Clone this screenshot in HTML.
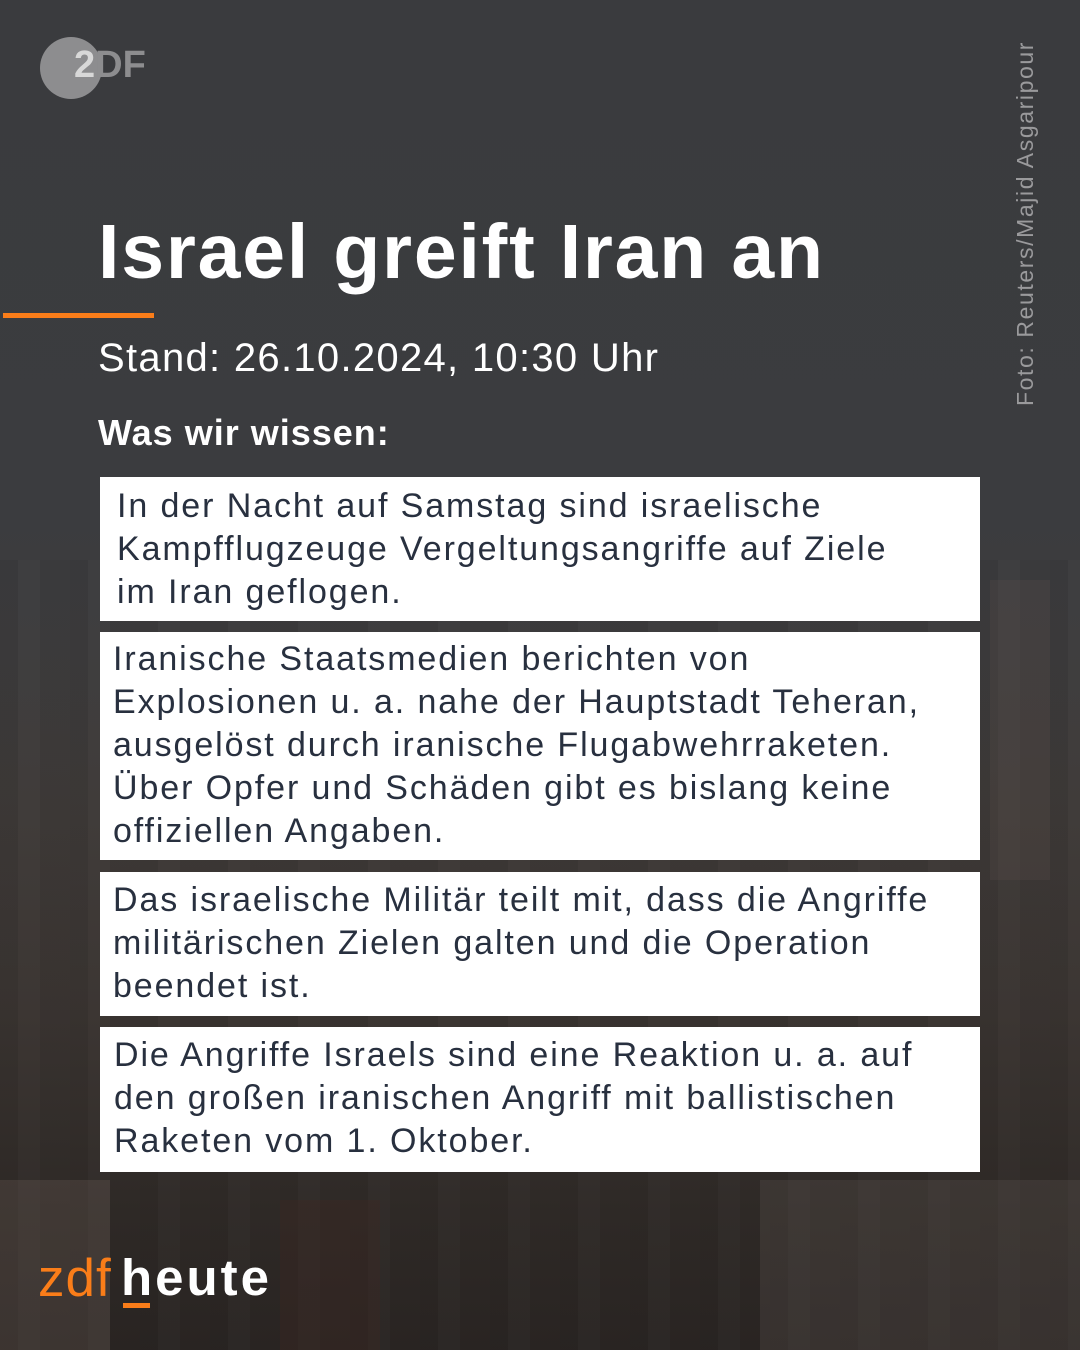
<!DOCTYPE html>
<html><head><meta charset="utf-8"><style>
*{margin:0;padding:0;box-sizing:border-box}
body{width:1080px;height:1350px;overflow:hidden;position:relative;font-family:"Liberation Sans",sans-serif;
background:linear-gradient(180deg,#3a3b3e 0%,#3b3c3f 38%,#3d3c3d 48%,#3e3a38 60%,#3a3431 75%,#2f2a27 90%,#2a2523 100%);}
.city{position:absolute;left:0;right:0;top:560px;bottom:0;background:
repeating-linear-gradient(90deg,rgba(0,0,0,.08) 0 18px,rgba(255,255,255,.02) 18px 40px,rgba(0,0,0,.05) 40px 70px);opacity:.6}
.bld{position:absolute;background:rgba(120,105,95,.25)}
.t{position:absolute;color:#fff;white-space:nowrap}
.box{position:absolute;left:100px;width:880px;background:#fff;color:#28303f;font-size:34px;line-height:43px;letter-spacing:1.9px;white-space:nowrap}
</style></head><body>
<div class="city"></div>
<div class="bld" style="left:0;top:1180px;width:110px;height:170px"></div>
<div class="bld" style="left:280px;top:1200px;width:100px;height:150px;background:rgba(60,40,35,.4)"></div>
<div class="bld" style="left:990px;top:580px;width:60px;height:300px;background:rgba(90,80,75,.25)"></div>
<div class="bld" style="left:760px;top:1180px;width:320px;height:170px;background:rgba(110,100,95,.22)"></div>

<div style="position:absolute;left:40px;top:37px;width:62px;height:62px;border-radius:50%;background:#8d8d8f"></div>
<div class="t" style="left:74px;top:44px;font-size:38px;font-weight:bold;color:#d8d8d8;letter-spacing:0px">2<span style="color:#8d8d8f">DF</span></div>

<div class="t" style="left:1012px;top:406px;transform-origin:0 0;transform:rotate(-90deg);font-size:23px;color:#9a9a9c;width:370px;letter-spacing:1.6px">Foto: Reuters/Majid Asgaripour</div>

<div class="t" style="left:98px;top:208px;font-size:77px;font-weight:bold;letter-spacing:1.8px">Israel greift Iran an</div>
<div style="position:absolute;left:3px;top:313px;width:151px;height:5px;background:#fa7d19"></div>
<div class="t" style="left:98px;top:336px;font-size:40px;letter-spacing:1.3px">Stand: 26.10.2024, 10:30 Uhr</div>
<div class="t" style="left:98px;top:412px;font-size:36px;font-weight:bold;letter-spacing:1px">Was wir wissen:</div>

<div class="box" style="top:477px;height:144px;padding:8px 0 0 17px">In der Nacht auf Samstag sind israelische<br>Kampfflugzeuge Vergeltungsangriffe auf Ziele<br>im Iran geflogen.</div>
<div class="box" style="top:632px;height:228px;padding:6px 0 0 13px">Iranische Staatsmedien berichten von<br>Explosionen u. a. nahe der Hauptstadt Teheran,<br>ausgelöst durch iranische Flugabwehrraketen.<br>Über Opfer und Schäden gibt es bislang keine<br>offiziellen Angaben.</div>
<div class="box" style="top:872px;height:144px;padding:7px 0 0 13px">Das israelische Militär teilt mit, dass die Angriffe<br>militärischen Zielen galten und die Operation<br>beendet ist.</div>
<div class="box" style="top:1027px;height:145px;padding:7px 0 0 14px">Die Angriffe Israels sind eine Reaktion u. a. auf<br>den großen iranischen Angriff mit ballistischen<br>Raketen vom 1. Oktober.</div>

<div class="t" style="left:38px;top:1248px;font-size:53px;color:#fa7d19;letter-spacing:1px">zdf</div>
<div class="t" style="left:121px;top:1248px;font-size:51px;font-weight:bold;letter-spacing:3px">heute</div>
<div style="position:absolute;left:123px;top:1303px;width:27px;height:5px;background:#fa7d19"></div>
</body></html>
